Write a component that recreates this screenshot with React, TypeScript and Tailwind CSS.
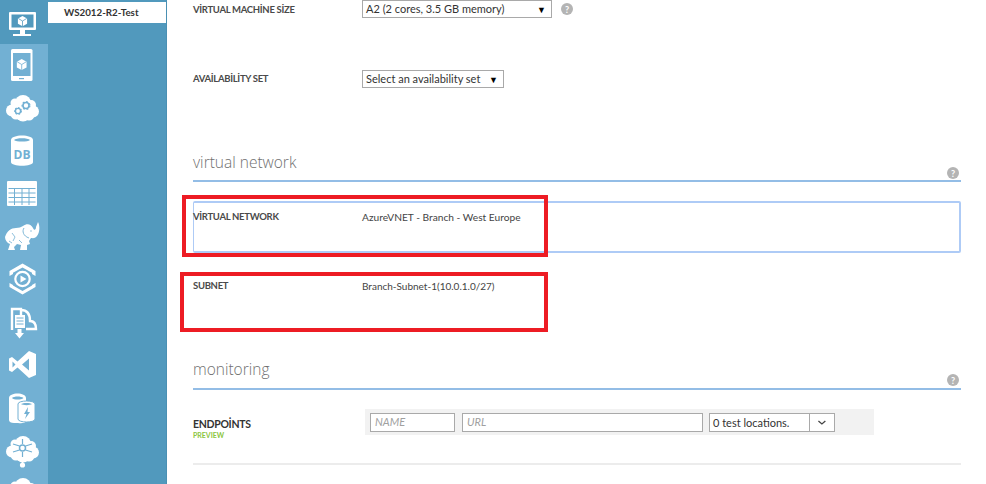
import React from "react";

const R = "#72b0d3";
const W = "#ffffff";

function Cube({ cx, cy, s, fill }: { cx: number; cy: number; s: number; fill: string }) {
  return (
    <g transform={`translate(${cx} ${cy}) scale(${s})`}>
      <path d="M0 -6 L5.4 -3 L5.4 3.2 L0 6.2 L-5.4 3.2 L-5.4 -3 Z" fill={W} />
      <path d="M-5 -3 L0 0 L5 -3 M0 0 V6" stroke={fill} strokeWidth="0.9" fill="none" />
    </g>
  );
}

function Cloud({ dy }: { dy: number }) {
  return (
    <g transform={`translate(0 ${dy})`} fill={W}>
      <circle cx="12" cy="23.5" r="6" />
      <circle cx="15" cy="16" r="4.5" />
      <circle cx="23" cy="16" r="8" />
      <circle cx="31" cy="18" r="5" />
      <circle cx="33" cy="24.5" r="6" />
      <circle cx="23" cy="27" r="7.5" />
      <circle cx="16" cy="27" r="5.5" />
      <circle cx="29" cy="28" r="5.5" />
    </g>
  );
}

function Gear({ cx, cy, r }: { cx: number; cy: number; r: number }) {
  return (
    <g>
      <circle cx={cx} cy={cy} r={r} fill="none" stroke={R} strokeWidth={r * 0.55} />
      <circle cx={cx} cy={cy} r={r * 1.3} fill="none" stroke={R} strokeWidth={r * 0.4} strokeDasharray={`${r * 0.6} ${r * 0.6}`} />
    </g>
  );
}

const icons: React.ReactNode[] = [
  <g key="m">
    <rect x="9" y="12" width="27" height="18" rx="1" fill={W} />
    <rect x="11.5" y="14.5" width="22" height="13" fill="#5199bd" />
    <path d="M20 30 H25 V34 H31 V36 H13 V34 H20 Z" fill={W} />
    <Cube cx={22.5} cy={21} s={0.85} fill="#5199bd" />
  </g>,
  <g key="p">
    <rect x="11" y="5" width="21.5" height="32" rx="1.5" fill={W} />
    <rect x="13" y="9" width="17.5" height="23" fill={R} />
    <rect x="19" y="34" width="5" height="1.2" fill={R} />
    <Cube cx={21.7} cy={20.5} s={0.9} fill={R} />
  </g>,
  <g key="c">
    <Cloud dy={0} />
    <Gear cx={18} cy={24} r={2.6} />
    <Gear cx={26} cy={18.5} r={3} />
  </g>,
  <g key="db">
    <path d="M11 10 C11 4 33 4 33 10 V32 C33 37 11 37 11 32 Z" fill={W} />
    <path d="M14 10 C16 7.5 28 7.5 30 10 C28 12 16 12 14 10 Z" fill={R} />
    <text x="22" y="29" textAnchor="middle" fontSize="12" fontWeight="700" fill={R} fontFamily="Open Sans, sans-serif">DB</text>
  </g>,
  <g key="t">
    <rect x="7" y="8" width="30" height="25" rx="1" fill={W} />
    <path d="M8.5 15.5 H35.5 M8.5 20 H35.5 M8.5 24.5 H35.5 M8.5 29 H35.5 M14.5 15 V32 M22 15 V32 M29 15 V32" stroke={R} strokeWidth="1" />
  </g>,
  <g key="e">
    <path d="M5 21 C7 15 11 12 16 12 C19 12 21 11 23 10 C27 7 31 8 33 12 C34 15 36 14 36 11 L38 6 C40 10 40 16 37 20 C35 23 32 22 31 22 L29 25 L30 28 L27 29 L27 34 H20 L21 29 L17 28 L14 31 L15 34 H8 L10 28 C7 27 5 24 5 21 Z" fill={W} />
    <path d="M24 12 C22 15 23 20 29 22" stroke={R} strokeWidth="0.9" fill="none" />
    <path d="M12 17 L15 21 L13 25 M9 25 L12 27 M19 24 L22 27" stroke={R} strokeWidth="0.8" fill="none" />
    <circle cx="31" cy="15" r="0.7" fill={R} />
  </g>,
  <g key="h">
    <path d="M9.5 17 V12 L22.5 4.5 L35.5 12 V17 L32 15 V13.8 L22.5 8.5 L13 13.8 V15 Z" fill={W} />
    <path d="M9.5 24 V28 L22.5 35.5 L35.5 28 V24 L32 26 V26.5 L22.5 32 L13 26.5 V26 Z" fill={W} />
    <circle cx="22.5" cy="20" r="7.2" fill="none" stroke={W} strokeWidth="2.2" />
    <path d="M20.5 16.5 L26.5 20 L20.5 23.5 Z" fill={W} />
  </g>,
  <g key="d">
    <path d="M12 28 V7 H21 V13 M21 8 C27 8 30 12 30 19 C34 19 36 22 36 27 H26" fill="none" stroke={W} strokeWidth="2.4" />
    <rect x="15" y="13" width="10" height="13" fill={W} />
    <path d="M16.5 16 H23.5 M16.5 19 H23.5 M16.5 22 H23.5" stroke={R} strokeWidth="1" />
    <path d="M17.5 27 H21.5 V31 H24 L19.5 36.5 L15 31 H17.5 Z" fill={W} />
  </g>,
  <g key="v">
    <path d="M29 6 L36 9 V30 L29 33 L17.5 22.5 L12 27 L9 25.5 V13.5 L12 12 L17.5 16.5 Z M29 13.5 L22 19.5 L29 25.5 Z M12.5 16.5 V22.5 L15.5 19.5 Z" fill={W} fillRule="evenodd" />
  </g>,
  <g key="cy">
    <path d="M9 10 C9 4 26 4 26 10 V33 C26 35 22 35.5 18 35 H14 C11 35 9 34 9 32 Z" fill={W} />
    <path d="M12 10 C14 8 21 8 23.5 10 C21 12 14 12 12 10 Z" fill={R} />
    <path d="M18 16 C18 12 35 12 35 16 V31 C35 35 18 35 18 31 Z" fill={W} stroke={R} strokeWidth="1" />
    <path d="M21 16 C23 14.5 30 14.5 32 16 C30 17.5 23 17.5 21 16 Z" fill={R} />
    <path d="M28 19 L24 26 H26.5 L25 31 L30 24 H27.5 Z" fill={R} />
  </g>,
  <g key="n">
    <Cloud dy={-3} />
    <path d="M22.5 28 V34" stroke={W} strokeWidth="1.5" />
    <circle cx="22.5" cy="34" r="2.6" fill={W} />
    <circle cx="22.5" cy="17" r="3" fill="none" stroke={R} strokeWidth="1.5" />
    <path d="M22.5 8 V13 M22.5 21 V26 M13 13 L19.5 15 M32 13 L25.5 15 M13 21 L19.5 19 M32 21 L25.5 19" stroke={R} strokeWidth="1.2" />
  </g>,
  <g key="z">
    <Cloud dy={-4} />
  </g>,
];

function Help({ className }: { className: string }) {
  return (
    <span className={`flex h-[12px] w-[12px] items-center justify-center rounded-full bg-[#b4b4b4] text-[9px] font-bold leading-none text-white ${className}`}>?</span>
  );
}

function Label({ children, className = "w-[169px]" }: { children: React.ReactNode; className?: string }) {
  return <span className={`shrink-0 text-[9.5px] font-bold leading-[14px] tracking-[-0.3px] text-[#4a4a4a] ${className}`}>{children}</span>;
}

function Select({ text, className }: { text: string; className: string }) {
  return (
    <div className={`flex h-[18px] items-center justify-between border border-[#a9a9a9] bg-white pl-[3px] pr-[5px] text-[11px] text-[#333] ${className}`}>
      <span>{text}</span>
      <span className="text-[9px] leading-none text-black">▼</span>
    </div>
  );
}

function Section({ title, className }: { title: string; className: string }) {
  return (
    <div className={`flex items-start justify-between border-b-2 border-[#93bde6] ${className}`}>
      <h2 className="font-['Open_Sans',sans-serif] text-[15.5px] font-light leading-[24px] text-[#6f6f6f]">{title}</h2>
      <Help className="mr-[2px] mt-[17px]" />
    </div>
  );
}

export default function App() {
  return (
    <div className="relative flex h-[484px] w-[986px] overflow-hidden bg-white font-['Lato',sans-serif]">
      <nav className="w-[48px] shrink-0 overflow-hidden bg-[#72b0d3]">
        {icons.map((icon, i) => (
          <div key={i} className={i === 0 ? "h-[44px] bg-[#5199bd]" : "h-[43px]"}>
            <svg width="48" height="43" viewBox="0 0 48 43" className="block">{icon}</svg>
          </div>
        ))}
      </nav>
      <aside className="w-[119px] shrink-0 border-r border-[#4a90b3] bg-[#5199bd] pt-[2px]">
        <div className="flex h-[21px] items-center bg-white pl-[16px] text-[9.75px] font-bold text-[#333]">WS2012-R2-Test</div>
      </aside>
      <main className="flex flex-1 flex-col pl-[26px] pr-[25px]">
        <div className="flex h-[18px] items-center">
          <Label className="mt-[1px] w-[169px]">VİRTUAL MACHİNE SİZE</Label>
          <Select text="A2 (2 cores, 3.5 GB memory)" className="w-[190px]" />
          <Help className="ml-[9px]" />
        </div>
        <div className="mt-[52px] flex h-[18px] items-center">
          <Label>AVAİLABİLİTY SET</Label>
          <Select text="Select an availability set" className="w-[142px]" />
        </div>
        <Section title="virtual network" className="mt-[62px] h-[32px]" />
        <div className="mt-[19px] flex h-[52px] items-start rounded-[2px] border-2 border-l-[1px] border-[#aecbf6] pt-[7px]">
          <Label className="-ml-[1px] w-[169px]">VİRTUAL NETWORK</Label>
          <span className="text-[10.2px] leading-[14px] text-[#444]">AzureVNET - Branch - West Europe</span>
        </div>
        <div className="mt-[26px] flex h-[52px] items-start">
          <Label>SUBNET</Label>
          <span className="text-[10px] leading-[14px] text-[#444]">Branch-Subnet-1(10.0.1.0/27)</span>
        </div>
        <Section title="monitoring" className="mt-[26px] h-[33px]" />
        <div className="mt-[19px] flex h-[26px] items-start">
          <div className="mt-[9px] flex w-[172px] shrink-0 flex-col">
            <span className="text-[10.5px] font-bold leading-[12px] tracking-[-0.3px] text-[#333]">ENDPOİNTS</span>
            <span className="text-[7px] font-bold leading-[10px] text-[#8cc63f]">PREVIEW</span>
          </div>
          <div className="flex h-[26px] w-[509px] items-center bg-[#f2f2f2] pl-[5px]">
            <div className="flex h-[19px] w-[85px] items-center border border-[#a9a9a9] bg-white pl-[4px] text-[11px] italic text-[#a0a0a0]">NAME</div>
            <div className="ml-[7px] flex h-[19px] w-[241px] items-center border border-[#a9a9a9] bg-white pl-[4px] text-[11px] italic text-[#a0a0a0]">URL</div>
            <div className="ml-[6px] flex h-[19px] w-[126px] items-center border border-[#a9a9a9] bg-white text-[#333]">
              <span className="w-[101px] border-r border-[#a9a9a9] pl-[3px] text-[11px] leading-[17px]">0 test locations.</span>
              <svg width="24" height="17" viewBox="0 0 24 17"><path d="M8.5 7 L12 10 L15.5 7" fill="none" stroke="#444" strokeWidth="1.3" /></svg>
            </div>
          </div>
        </div>
        <div className="mt-[28px] h-[2px] bg-[#ececec]" />
      </main>
      <div className="absolute left-[182px] top-[195px] h-[62px] w-[366px] border-4 border-[#ed1c24]" />
      <div className="absolute left-[180px] top-[272px] h-[60px] w-[368px] border-4 border-[#ed1c24]" />
    </div>
  );
}
